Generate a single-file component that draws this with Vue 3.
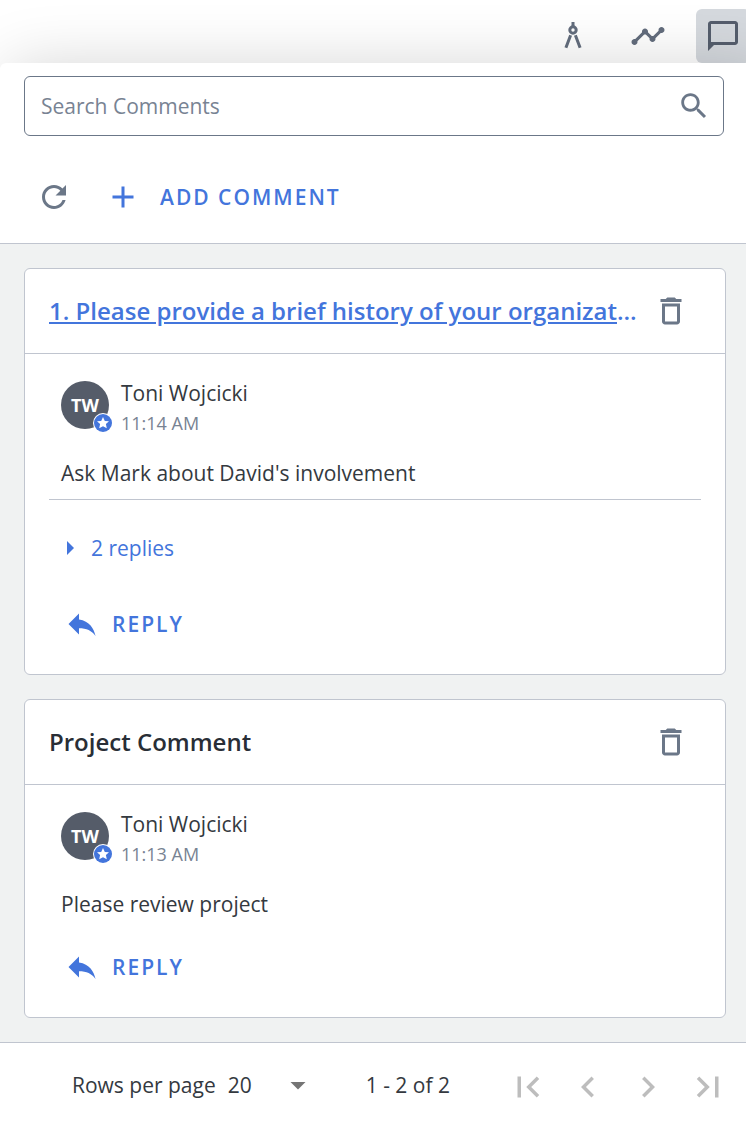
<script setup>
import { ref } from 'vue'

const search = ref('')
const rowsPerPage = ref('20')

const comments = [
  {
    id: 1,
    title: '1. Please provide a brief history of your organization',
    linked: true,
    author: 'Toni Wojcicki',
    initials: 'TW',
    time: '11:14 AM',
    text: "Ask Mark about David's involvement",
    replies: 2,
  },
  {
    id: 2,
    title: 'Project Comment',
    linked: false,
    author: 'Toni Wojcicki',
    initials: 'TW',
    time: '11:13 AM',
    text: 'Please review project',
    replies: 0,
  },
]

const pageButtons = [
  { label: 'First page', path: 'M18.41 16.59L13.82 12l4.59-4.59L17 6l-6 6 6 6zM6 6h2v12H6z' },
  { label: 'Previous page', path: 'M15.41 7.41L14 6l-6 6 6 6 1.41-1.41L10.83 12z' },
  { label: 'Next page', path: 'M10 6L8.59 7.41 13.17 12l-4.58 4.59L10 18l6-6z' },
  { label: 'Last page', path: 'M5.59 7.41L10.18 12l-4.59 4.59L7 18l6-6-6-6zM16 6h2v12h-2z' },
]
</script>

<template>
  <div class="app">
    <nav class="tabs" aria-label="Panels">
      <button class="tab" type="button" aria-label="Design">
        <svg class="icon" viewBox="0 0 36 36">
          <g fill="none" stroke="currentColor" stroke-width="3">
            <path d="M18 4v4" />
            <circle cx="18" cy="12" r="3.200" />
            <path d="M15.600 17.200L10.900 29.800M20.400 17.200L25.100 29.800" />
          </g>
        </svg>
      </button>
      <button class="tab" type="button" aria-label="Activity">
        <svg class="icon" viewBox="0 0 24 24">
          <path d="M23 8c0 1.100-.9 2-2 2-.18 0-.35-.02-.51-.07l-3.560 3.550c.05.16.07.34.07.52 0 1.100-.9 2-2 2s-2-.9-2-2c0-.18.02-.36.07-.52l-2.550-2.550c-.16.05-.34.07-.52.07s-.36-.02-.52-.07l-4.550 4.560c.05.16.07.33.07.51 0 1.100-.9 2-2 2s-2-.9-2-2 .9-2 2-2c.18 0 .35.02.51.07l4.560-4.550C8.020 9.360 8 9.180 8 9c0-1.100.9-2 2-2s2 .9 2 2c0 .18-.02.36-.07.52l2.550 2.550c.16-.05.34-.07.52-.07s.36.02.52.07l3.550-3.560C19.020 8.350 19 8.180 19 8c0-1.100.9-2 2-2s2 .9 2 2z" />
        </svg>
      </button>
      <button class="tab active" type="button" aria-label="Comments">
        <svg class="icon" viewBox="0 0 24 24">
          <path d="M20 2H4c-1.100 0-2 .9-2 2v18l4-4h14c1.100 0 2-.9 2-2V4c0-1.100-.9-2-2-2zm0 14H4V4h16v12z" />
        </svg>
      </button>
    </nav>

    <main class="panel">
      <div class="tools">
        <label class="search">
          <input v-model="search" type="text" placeholder="Search Comments" aria-label="Search Comments" />
          <svg viewBox="0 0 24 24">
            <path d="M15.500 14h-.79l-.28-.27C15.410 12.590 16 11.110 16 9.500 16 5.910 13.090 3 9.500 3S3 5.910 3 9.500 5.910 16 9.500 16c1.610 0 3.090-.59 4.230-1.570l.27.28v.79l5 4.990L20.490 19l-4.990-5zm-6 0C7.010 14 5 11.990 5 9.500S7.010 5 9.500 5 14 7.010 14 9.500 11.990 14 9.500 14z" />
          </svg>
        </label>
        <div class="actions">
          <button class="icon-button" type="button" aria-label="Refresh">
            <svg class="icon" viewBox="0 0 24 24">
              <path d="M17.650 6.350C16.200 4.900 14.210 4 12 4c-4.420 0-7.990 3.580-7.990 8s3.570 8 7.990 8c3.730 0 6.840-2.550 7.730-6h-2.080c-.82 2.330-3.040 4-5.650 4-3.310 0-6-2.690-6-6s2.690-6 6-6c1.660 0 3.140.69 4.220 1.780L13 11h7V4l-2.350 2.350z" />
            </svg>
          </button>
          <button class="text-button add" type="button">
            <svg class="icon" viewBox="0 0 24 24"><path d="M19 13h-6v6h-2v-6H5v-2h6V5h2v6h6v2z" /></svg>
            <span>ADD COMMENT</span>
          </button>
        </div>
      </div>

      <section class="list">
        <article v-for="c in comments" :key="c.id" class="card">
          <header class="card-head">
            <h2 class="title" :class="{ linked: c.linked }">
              <a v-if="c.linked" href="#">{{ c.title }}</a>
              <template v-else>{{ c.title }}</template>
            </h2>
            <button class="icon-button" type="button" aria-label="Delete comment">
              <svg class="icon" viewBox="0 0 24 24">
                <path d="M6 19c0 1.100.9 2 2 2h8c1.100 0 2-.9 2-2V7H6v12zM8 9h8v10H8V9zm7.500-5l-1-1h-5l-1 1H5v2h14V4z" />
              </svg>
            </button>
          </header>
          <div class="card-body">
            <div class="entry" :class="{ divided: c.replies }">
              <div class="author">
                <div class="avatar">
                  {{ c.initials }}
                  <svg class="badge" viewBox="0 0 20 20">
                    <circle cx="10" cy="10" r="10" fill="#fff" />
                    <circle cx="10" cy="10" r="9" fill="#4375dc" />
                    <path fill="#fff" d="M10 4l1.800 3.900 4.200.4-3.100 2.800.9 4.200L10 13.200l-3.800 2.100.9-4.200L4 8.300l4.200-.4z" />
                  </svg>
                </div>
                <div>
                  <div class="name">{{ c.author }}</div>
                  <div class="time">{{ c.time }}</div>
                </div>
              </div>
              <p class="message">{{ c.text }}</p>
            </div>
            <button v-if="c.replies" class="replies" type="button">
              <svg viewBox="0 0 8 14"><path d="M0 0v14l7-7z" /></svg>
              <span>{{ c.replies }} replies</span>
            </button>
            <button class="text-button reply" type="button">
              <svg class="icon" viewBox="0 0 24 24"><path d="M10 9V5l-7 7 7 7v-4.100c5 0 8.500 1.600 11 5.100-1-5-4-10-11-11z" /></svg>
              <span>REPLY</span>
            </button>
          </div>
        </article>
      </section>

      <footer class="pager">
        <label for="rows">Rows per page</label>
        <div class="select">
          <select id="rows" v-model="rowsPerPage">
            <option>20</option>
            <option>50</option>
            <option>100</option>
          </select>
          <svg class="icon" viewBox="0 0 24 24"><path d="M7 10l5 5 5-5z" /></svg>
        </div>
        <span class="range">1 - 2 of 2</span>
        <div class="pages">
          <button v-for="b in pageButtons" :key="b.label" type="button" disabled :aria-label="b.label">
            <svg viewBox="0 0 24 24"><path :d="b.path" /></svg>
          </button>
        </div>
      </footer>
    </main>
  </div>
</template>

<style>
body {
  margin: 0;
  background: #fff;
}
</style>

<style scoped>
* {
  box-sizing: border-box;
}

.app {
  min-height: 100vh;
  display: flex;
  flex-direction: column;
  overflow: hidden;
  background: #fff;
  color: #343940;
  font-family: "Open Sans", "Noto Sans", sans-serif;
  font-size: 21px;
  line-height: 30px;
}

button,
input,
select {
  font: inherit;
  margin: 0;
  padding: 0;
  border: 0;
  background: none;
  color: inherit;
}

button {
  cursor: pointer;
}

svg {
  display: block;
  flex: none;
  fill: currentColor;
}

.icon {
  width: 36px;
  height: 36px;
}

.tabs {
  display: flex;
  justify-content: flex-end;
  gap: 21px;
  padding-top: 9px;
  margin-right: -4px;
}

.tab {
  width: 54px;
  height: 54px;
  display: grid;
  place-items: center;
  border-radius: 6px;
  color: #636d7d;
}

.tab.active {
  background: #d5d9de;
  color: #555e6d;
}

.panel {
  position: relative;
  flex: 1;
  display: flex;
  flex-direction: column;
  border-radius: 6px 0 0 0;
  background: #fff;
  box-shadow: 16px 12px 64px 8px rgba(0, 0, 0, 0.18);
}

.tools {
  padding: 13px 22px 19px 24px;
  border-bottom: 1px solid #c0c5cf;
}

.search {
  display: flex;
  align-items: center;
  height: 60px;
  padding: 0 12px 0 16px;
  border: 1px solid #6b7788;
  border-radius: 6px;
  color: #6b7788;
}

.search input {
  flex: 1;
  min-width: 0;
  outline: 0;
}

.search input::placeholder {
  color: #788393;
  opacity: 1;
}

.search svg {
  width: 34px;
  height: 34px;
}

.actions {
  display: flex;
  align-items: center;
  gap: 12px;
  padding-top: 34px;
}

.icon-button {
  flex: none;
  width: 60px;
  height: 54px;
  display: grid;
  place-items: center;
  color: #6b7788;
}

.text-button {
  display: flex;
  align-items: center;
  height: 54px;
  color: #4375dc;
  font-weight: 600;
  letter-spacing: 2px;
}

.add {
  gap: 19px;
  padding: 0 9px;
}

.reply {
  gap: 12px;
  padding-left: 15px;
}

.list {
  flex: 1;
  display: flex;
  flex-direction: column;
  gap: 24px;
  padding: 24px 20px 24px 24px;
  background: #f0f2f2;
}

.card {
  border: 1px solid #c0c5cf;
  border-radius: 6px;
  background: #fff;
}

.card-head {
  display: flex;
  align-items: center;
  justify-content: space-between;
  height: 85px;
  padding: 0 24px;
  border-bottom: 1px solid #c0c5cf;
}

.title {
  min-width: 0;
  margin: 0;
  overflow: hidden;
  white-space: nowrap;
  text-overflow: ellipsis;
  font-size: 24px;
  line-height: 36px;
  font-weight: 600;
  color: #292e36;
}

.title.linked,
.title a {
  color: #4375dc;
}

.title a {
  text-decoration: underline;
}

.card-body {
  padding: 24px 24px 23px;
}

.entry {
  padding: 0 12px;
}

.entry.divided {
  padding-bottom: 11px;
  margin-bottom: 33px;
  border-bottom: 1px solid #c0c5cf;
}

.author {
  display: flex;
  gap: 12px;
  align-items: flex-start;
}

.avatar {
  position: relative;
  width: 48px;
  height: 48px;
  margin-top: 3px;
  display: grid;
  place-items: center;
  border-radius: 50%;
  background: #555c69;
  color: #fff;
  font-size: 18px;
  font-weight: 700;
  line-height: 24px;
}

.badge {
  position: absolute;
  right: -4px;
  bottom: -4px;
  width: 20px;
  height: 20px;
}

.time {
  font-size: 18px;
  color: #788393;
}

.message {
  margin: 20px 0 0;
}

.replies {
  display: flex;
  align-items: center;
  gap: 16px;
  margin-bottom: 34px;
  padding-left: 18px;
  color: #4375dc;
}

.replies svg {
  width: 8px;
  height: 14px;
}

.entry:not(.divided) + .reply {
  margin-top: 21px;
}

.pager {
  display: flex;
  align-items: center;
  justify-content: flex-end;
  height: 80px;
  padding: 4px 8px 0 0;
  border-top: 1px solid #c0c5cf;
}

.select {
  position: relative;
  width: 88px;
  margin: 0 50px 0 12px;
}

.select select {
  display: block;
  width: 100%;
  height: 30px;
  appearance: none;
}

.select .icon {
  position: absolute;
  top: -3px;
  right: 0;
  color: #757575;
  pointer-events: none;
}

.range {
  margin-right: 48px;
}

.pages {
  display: flex;
  padding-top: 4px;
}

.pages button {
  width: 60px;
  height: 60px;
  display: grid;
  place-items: center;
  color: #bdbdbd;
}

.pages svg {
  width: 42px;
  height: 42px;
}
</style>
